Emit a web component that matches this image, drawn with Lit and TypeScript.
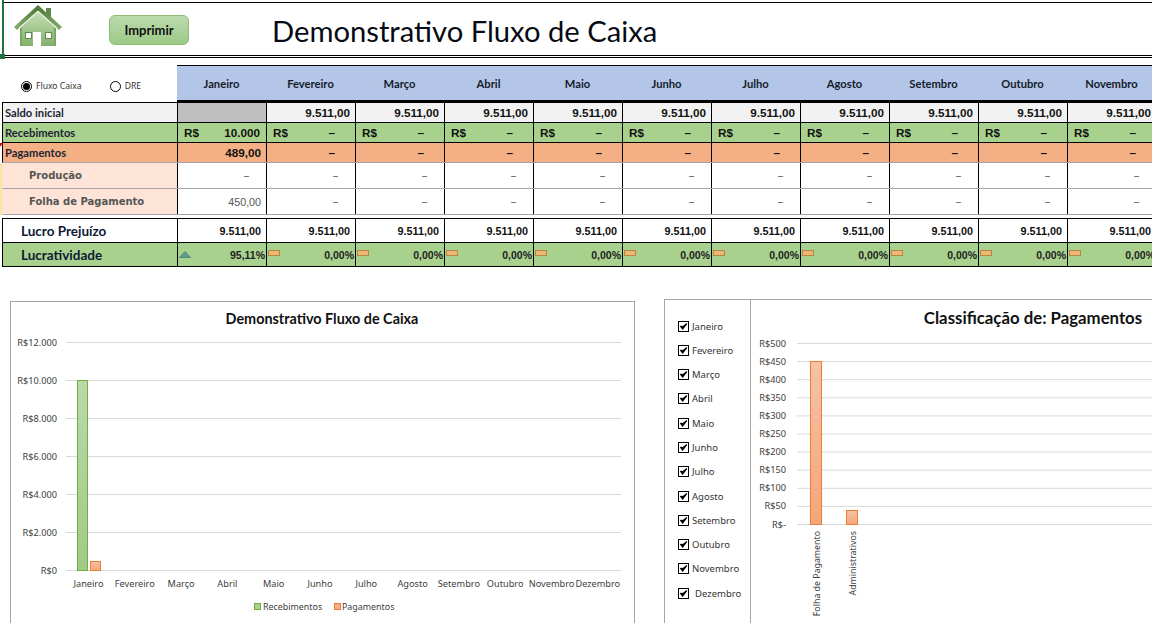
import { LitElement, html, css, svg } from "lit";
import { customElement } from "lit/decorators.js";

const MONTHS = ["Janeiro","Fevereiro","Março","Abril","Maio","Junho","Julho","Agosto","Setembro","Outubro","Novembro","Dezembro"];
const SHOWN = MONTHS.slice(0, 11);
const rest = Array.from({ length: 10 });

@customElement("app-root")
export class AppRoot extends LitElement {
  static styles = css`
    :host { display: block; width: 1152px; height: 623px; overflow: hidden; position: relative; background: #fff; font-family: Lato, "Liberation Sans", sans-serif; color: #000; font-variant-ligatures: none; }
    .sel { position: absolute; left: 2px; top: 0; width: 2px; height: 56px; background: #217346; }
    .handle { position: absolute; left: 0; top: 54px; width: 5px; height: 5px; background: #217346; }
    .top { margin-top: 2px; height: 56px; box-sizing: border-box; border-top: 1px solid #000; border-bottom: 3px double #000; margin-bottom: 7px; margin-left: 4px; display: flex; align-items: center; }
    .house { width: 52px; height: 48px; margin-left: 9px; margin-top: -2px; flex: none; }
    .btn { width: 80px; height: 30px; box-sizing: border-box; margin-left: 44px; margin-top: 2px; border: 1px solid #8dbb74; border-radius: 6px; background: linear-gradient(#bcdaae, #9cc986); font: 700 13px Lato, sans-serif; display: flex; align-items: center; justify-content: center; color: #111; }
    .title { font: 400 29.2px Lato, sans-serif; margin-left: 83px; margin-top: 3px; color: #050a14; white-space: nowrap; }
    .head { display: grid; grid-template-columns: 177px repeat(11, 89px); height: 37px; width: 1156px; }
    .radios { display: flex; align-items: center; padding: 5px 0 0 21px; font: 400 8.6px "Noto Sans", sans-serif; color: #333; }
    .radio { display: flex; align-items: center; gap: 4px; }
    .radio + .radio { margin-left: 28px; }
    .dot { width: 9px; height: 9px; border: 1px solid #000; border-radius: 50%; background: #fff; display: inline-flex; align-items: center; justify-content: center; }
    .dot.on::after { content: ""; width: 7px; height: 7px; border-radius: 50%; background: #000; }
    .month { background: #b4c6e7; border-top: 1px solid #000; border-bottom: 2px solid #000; display: flex; align-items: center; justify-content: center; font: 700 11.2px Lato, sans-serif; color: #141c2c; box-sizing: border-box; }
    .rows { margin-left: 2px; width: 1154px; }
    .row { display: grid; grid-template-columns: 175px repeat(11, 89px); box-sizing: border-box; border-bottom: 1px solid #000; border-left: 1px solid #000; }
    .row.s { height: 21px; border-top: 1px solid #000; background: #f2f2f2; }
    .row.r { height: 20px; background: #a9d18e; }
    .row.p { height: 20px; background: #f4b084; border-bottom-color: #a6a6a6; position: relative; }
    .row.p::before { content: ""; position: absolute; left: -3px; top: 0; border-top: 4px solid #e00000; border-right: 3px solid transparent; }
    .row.d { height: 26px; background: #fff; border-bottom-color: #a6a6a6; border-left-color: #fde4d6; box-shadow: -2px 0 0 #fbe3a0; }
    .row.l { height: 25px; border-top: 1px solid #000; margin-top: 3px; }
    .row.v { height: 24px; background: #a9d18e; }
    .c { border-right: 1px solid #000; display: flex; align-items: center; justify-content: flex-end; box-sizing: border-box; min-width: 0; white-space: nowrap; }
    .lbl { justify-content: flex-start; font: 700 11.2px Lato, sans-serif; padding-left: 2px; color: #1b2433; }
    .gray { background: #bfbfbf; }
    .num { font: 700 11.7px "Liberation Sans", sans-serif; padding-right: 5px; color: #111; }
    .money { justify-content: space-between; padding: 0 6px; font: 700 11.7px "Liberation Sans", sans-serif; color: #111; }
    .dash { font: 700 11.7px "Liberation Sans", sans-serif; padding-right: 20px; color: #111; }
    .money .dash { padding-right: 14px; }
    .sub { background: #fde4d6; font: 700 10px "DejaVu Sans", sans-serif; color: #555; padding-left: 26px; justify-content: flex-start; }
    .thin { font: 400 9px "Liberation Sans", sans-serif; color: #333; padding-right: 17px; }
    .thin.val { padding-right: 5px; font-size: 10.7px; color: #555; }
    .big { justify-content: flex-start; padding-left: 18px; font: 700 13.5px Lato, sans-serif; color: #0d1a33; }
    .sm { font: 700 10.8px "Liberation Sans", sans-serif; color: #111; padding-right: 5px; }
    .pct { justify-content: space-between; padding: 0 1px; font: 700 10.5px "Liberation Sans", sans-serif; color: #222; }
    .ico { width: 12px; height: 7px; flex: none; display: block; }
    .bar-ico { width: 12px; height: 6px; flex: none; box-sizing: border-box; border: 1px solid #b5873c; background: #edb777; margin-top: -3px; }
    .charts { display: flex; align-items: flex-start; margin-top: 32px; }
    .panel { box-sizing: border-box; border: 1px solid #a6a6a6; background: #fff; flex: none; }
    .left { width: 625px; height: 340px; margin-left: 10px; margin-top: 2px; }
    .right { width: 500px; height: 340px; margin-left: 29px; display: flex; }
    .checks { width: 86px; flex: none; box-sizing: border-box; border-right: 1px solid #a6a6a6; padding: 19px 0 0 13px; display: flex; flex-direction: column; gap: 10.3px; }
    .chk { display: flex; align-items: center; gap: 3px; height: 14px; font: 400 9.5px "Noto Sans", sans-serif; color: #333; }
    .chk:last-child span { margin-left: 3px; }
    .box { width: 11px; height: 11px; box-sizing: border-box; border: 1px solid #000; display: block; flex: none; }
    .chart { display: block; }
    text { font-family: "Noto Sans", sans-serif; font-size: 9.2px; fill: #404040; }
    .rot { font-size: 8.8px; }
    .leg { font-size: 8.9px; }
    .ttl { font: 700 14.4px Lato, sans-serif; fill: #111; }
    .ttl2 { font: 700 16.8px Lato, sans-serif; fill: #111; }
    .grid { stroke: #d9d9d9; stroke-width: 1; }
  `;

  private numCell(text: string) { return html`<div class="c num">${text}</div>`; }

  private leftChart() {
    const ticks = ["R$0","R$2.000","R$4.000","R$6.000","R$8.000","R$10.000","R$12.000"];
    return html`<svg class="chart" width="623" height="338" viewBox="11 302 623 338">
      <defs>
        <linearGradient id="g1" x1="0" y1="0" x2="0" y2="1"><stop offset="0" stop-color="#bbd8a9"/><stop offset="1" stop-color="#9fcb84"/></linearGradient>
        <linearGradient id="o1" x1="0" y1="0" x2="0" y2="1"><stop offset="0" stop-color="#f6c0a2"/><stop offset="1" stop-color="#f5a77c"/></linearGradient>
      </defs>
      <text class="ttl" x="322" y="324" text-anchor="middle">Demonstrativo Fluxo de Caixa</text>
      ${ticks.map((t, i) => { const y = 570.5 - i * 38; return svg`
        <line class="grid" x1="66" x2="621" y1=${y} y2=${y}></line>
        <text x="57" y=${y + 3} text-anchor="end">${t}</text>`; })}
      <rect x="77.5" y="380.5" width="10" height="190" fill="url(#g1)" stroke="#70ad47"></rect>
      <rect x="90.5" y="561.5" width="10" height="9" fill="url(#o1)" stroke="#ed7d31"></rect>
      ${MONTHS.map((m, i) => svg`<text x=${88.5 + i * 46.3} y="587" text-anchor="middle">${m}</text>`)}
      <rect x="254.5" y="603.5" width="6" height="6" fill="#a9d18e" stroke="#70ad47"></rect>
      <text class="leg" x="263" y="610">Recebimentos</text>
      <rect x="334.5" y="603.5" width="6" height="6" fill="#f4b084" stroke="#ed7d31"></rect>
      <text class="leg" x="342" y="610">Pagamentos</text>
    </svg>`;
  }

  private rightChart() {
    const ticks = ["R$-","R$50","R$100","R$150","R$200","R$250","R$300","R$350","R$400","R$450","R$500"];
    return html`<svg class="chart" width="412" height="338" viewBox="751 300 412 338">
      <defs>
        <linearGradient id="o2" x1="0" y1="0" x2="0" y2="1"><stop offset="0" stop-color="#f6c2a6"/><stop offset="1" stop-color="#f5a67a"/></linearGradient>
      </defs>
      <text class="ttl2" x="1033" y="324" text-anchor="middle">Classificação de: Pagamentos</text>
      ${ticks.map((t, i) => { const y = 524.5 - i * 18.1; return svg`
        <line class="grid" x1="797" x2="1152" y1=${y} y2=${y}></line>
        <text x="786" y=${y + 3} text-anchor="end">${t}</text>`; })}
      <rect x="810.5" y="361.5" width="11" height="163" fill="url(#o2)" stroke="#ed7d31"></rect>
      <rect x="846.5" y="510.5" width="11" height="14" fill="url(#o2)" stroke="#ed7d31"></rect>
      <text class="rot" transform="translate(820 531) rotate(-90)" text-anchor="end">Folha de Pagamento</text>
      <text class="rot" transform="translate(856 531) rotate(-90)" text-anchor="end">Administrativos</text>
    </svg>`;
  }

  render() {
    return html`
      <div class="sel"></div><div class="handle"></div>
      <div class="top">
        <svg class="house" viewBox="0 0 52 48">
          <defs>
            <linearGradient id="hb" x1="0" y1="0" x2="0" y2="1"><stop offset="0" stop-color="#c6dfb4"/><stop offset="1" stop-color="#83b06c"/></linearGradient>
            <linearGradient id="hr" x1="0" y1="0" x2="0" y2="1"><stop offset="0" stop-color="#4a7536"/><stop offset="1" stop-color="#86ae70"/></linearGradient>
          </defs>
          <polygon points="33,4 38,4 38,14 33,10" fill="#5f8a4a"></polygon>
          <polygon points="7,24 25,8 43,24 43,42 7,42" fill="url(#hb)"></polygon>
          <polygon points="7,24 9,24 9,42 7,42" fill="#7aa563"></polygon>
          <polygon points="41,24 43,24 43,42 41,42" fill="#7aa563"></polygon>
          <polygon points="1,23 25,1 49,23 46,26 25,7 4,26" fill="url(#hr)"></polygon>
          <polyline points="6,24 25,7 44,24" fill="none" stroke="#f2f7ee" stroke-width="1"></polyline>
          <rect x="12.5" y="28.5" width="6" height="6" fill="#fff" stroke="#5f8a4a" stroke-width="1"></rect>
          <rect x="32.5" y="28.5" width="6" height="6" fill="#fff" stroke="#5f8a4a" stroke-width="1"></rect>
          <rect x="20" y="28" width="8" height="14" fill="#fff"></rect>
        </svg>
        <div class="btn">Imprimir</div>
        <div class="title">Demonstrativo Fluxo de Caixa</div>
      </div>

      <div class="head">
        <div class="radios">
          <span class="radio"><span class="dot on"></span>Fluxo Caixa</span>
          <span class="radio"><span class="dot"></span>DRE</span>
        </div>
        ${SHOWN.map((m) => html`<div class="month">${m}</div>`)}
      </div>

      <div class="rows">
        <div class="row s">
          <div class="c lbl">Saldo inicial</div>
          <div class="c gray"></div>
          ${rest.map(() => this.numCell("9.511,00"))}
        </div>
        <div class="row r">
          <div class="c lbl">Recebimentos</div>
          <div class="c money"><span>R$</span><span>10.000</span></div>
          ${rest.map(() => html`<div class="c money"><span>R$</span><span class="dash">–</span></div>`)}
        </div>
        <div class="row p">
          <div class="c lbl">Pagamentos</div>
          <div class="c num">489,00</div>
          ${rest.map(() => html`<div class="c dash">–</div>`)}
        </div>
        <div class="row d">
          <div class="c sub">Produção</div>
          <div class="c thin">–</div>
          ${rest.map(() => html`<div class="c thin">–</div>`)}
        </div>
        <div class="row d">
          <div class="c sub">Folha de Pagamento</div>
          <div class="c thin val">450,00</div>
          ${rest.map(() => html`<div class="c thin">–</div>`)}
        </div>
        <div class="row l">
          <div class="c big">Lucro Prejuízo</div>
          ${SHOWN.map(() => html`<div class="c sm">9.511,00</div>`)}
        </div>
        <div class="row v">
          <div class="c big">Lucratividade</div>
          <div class="c pct">
            <svg class="ico" viewBox="0 0 12 7"><polygon points="6,0.5 11.5,6.5 0.5,6.5" fill="#5f9c8c" stroke="#3f7a6c" stroke-width="0.7"></polygon></svg>
            <span>95,11%</span>
          </div>
          ${rest.map(() => html`<div class="c pct"><span class="bar-ico"></span><span>0,00%</span></div>`)}
        </div>
      </div>

      <div class="charts">
        <div class="panel left">${this.leftChart()}</div>
        <div class="panel right">
          <div class="checks">
            ${MONTHS.map((m) => html`<div class="chk">
              <svg class="box" viewBox="0 0 9 9"><path d="M1.6 4.4 L3.6 7.2 L7.6 1.8 L3.8 4.6 Z" fill="#000" stroke="#000" stroke-width="1.1" stroke-linejoin="round"></path></svg>
              <span>${m}</span></div>`)}
          </div>
          ${this.rightChart()}
        </div>
      </div>
    `;
  }
}
